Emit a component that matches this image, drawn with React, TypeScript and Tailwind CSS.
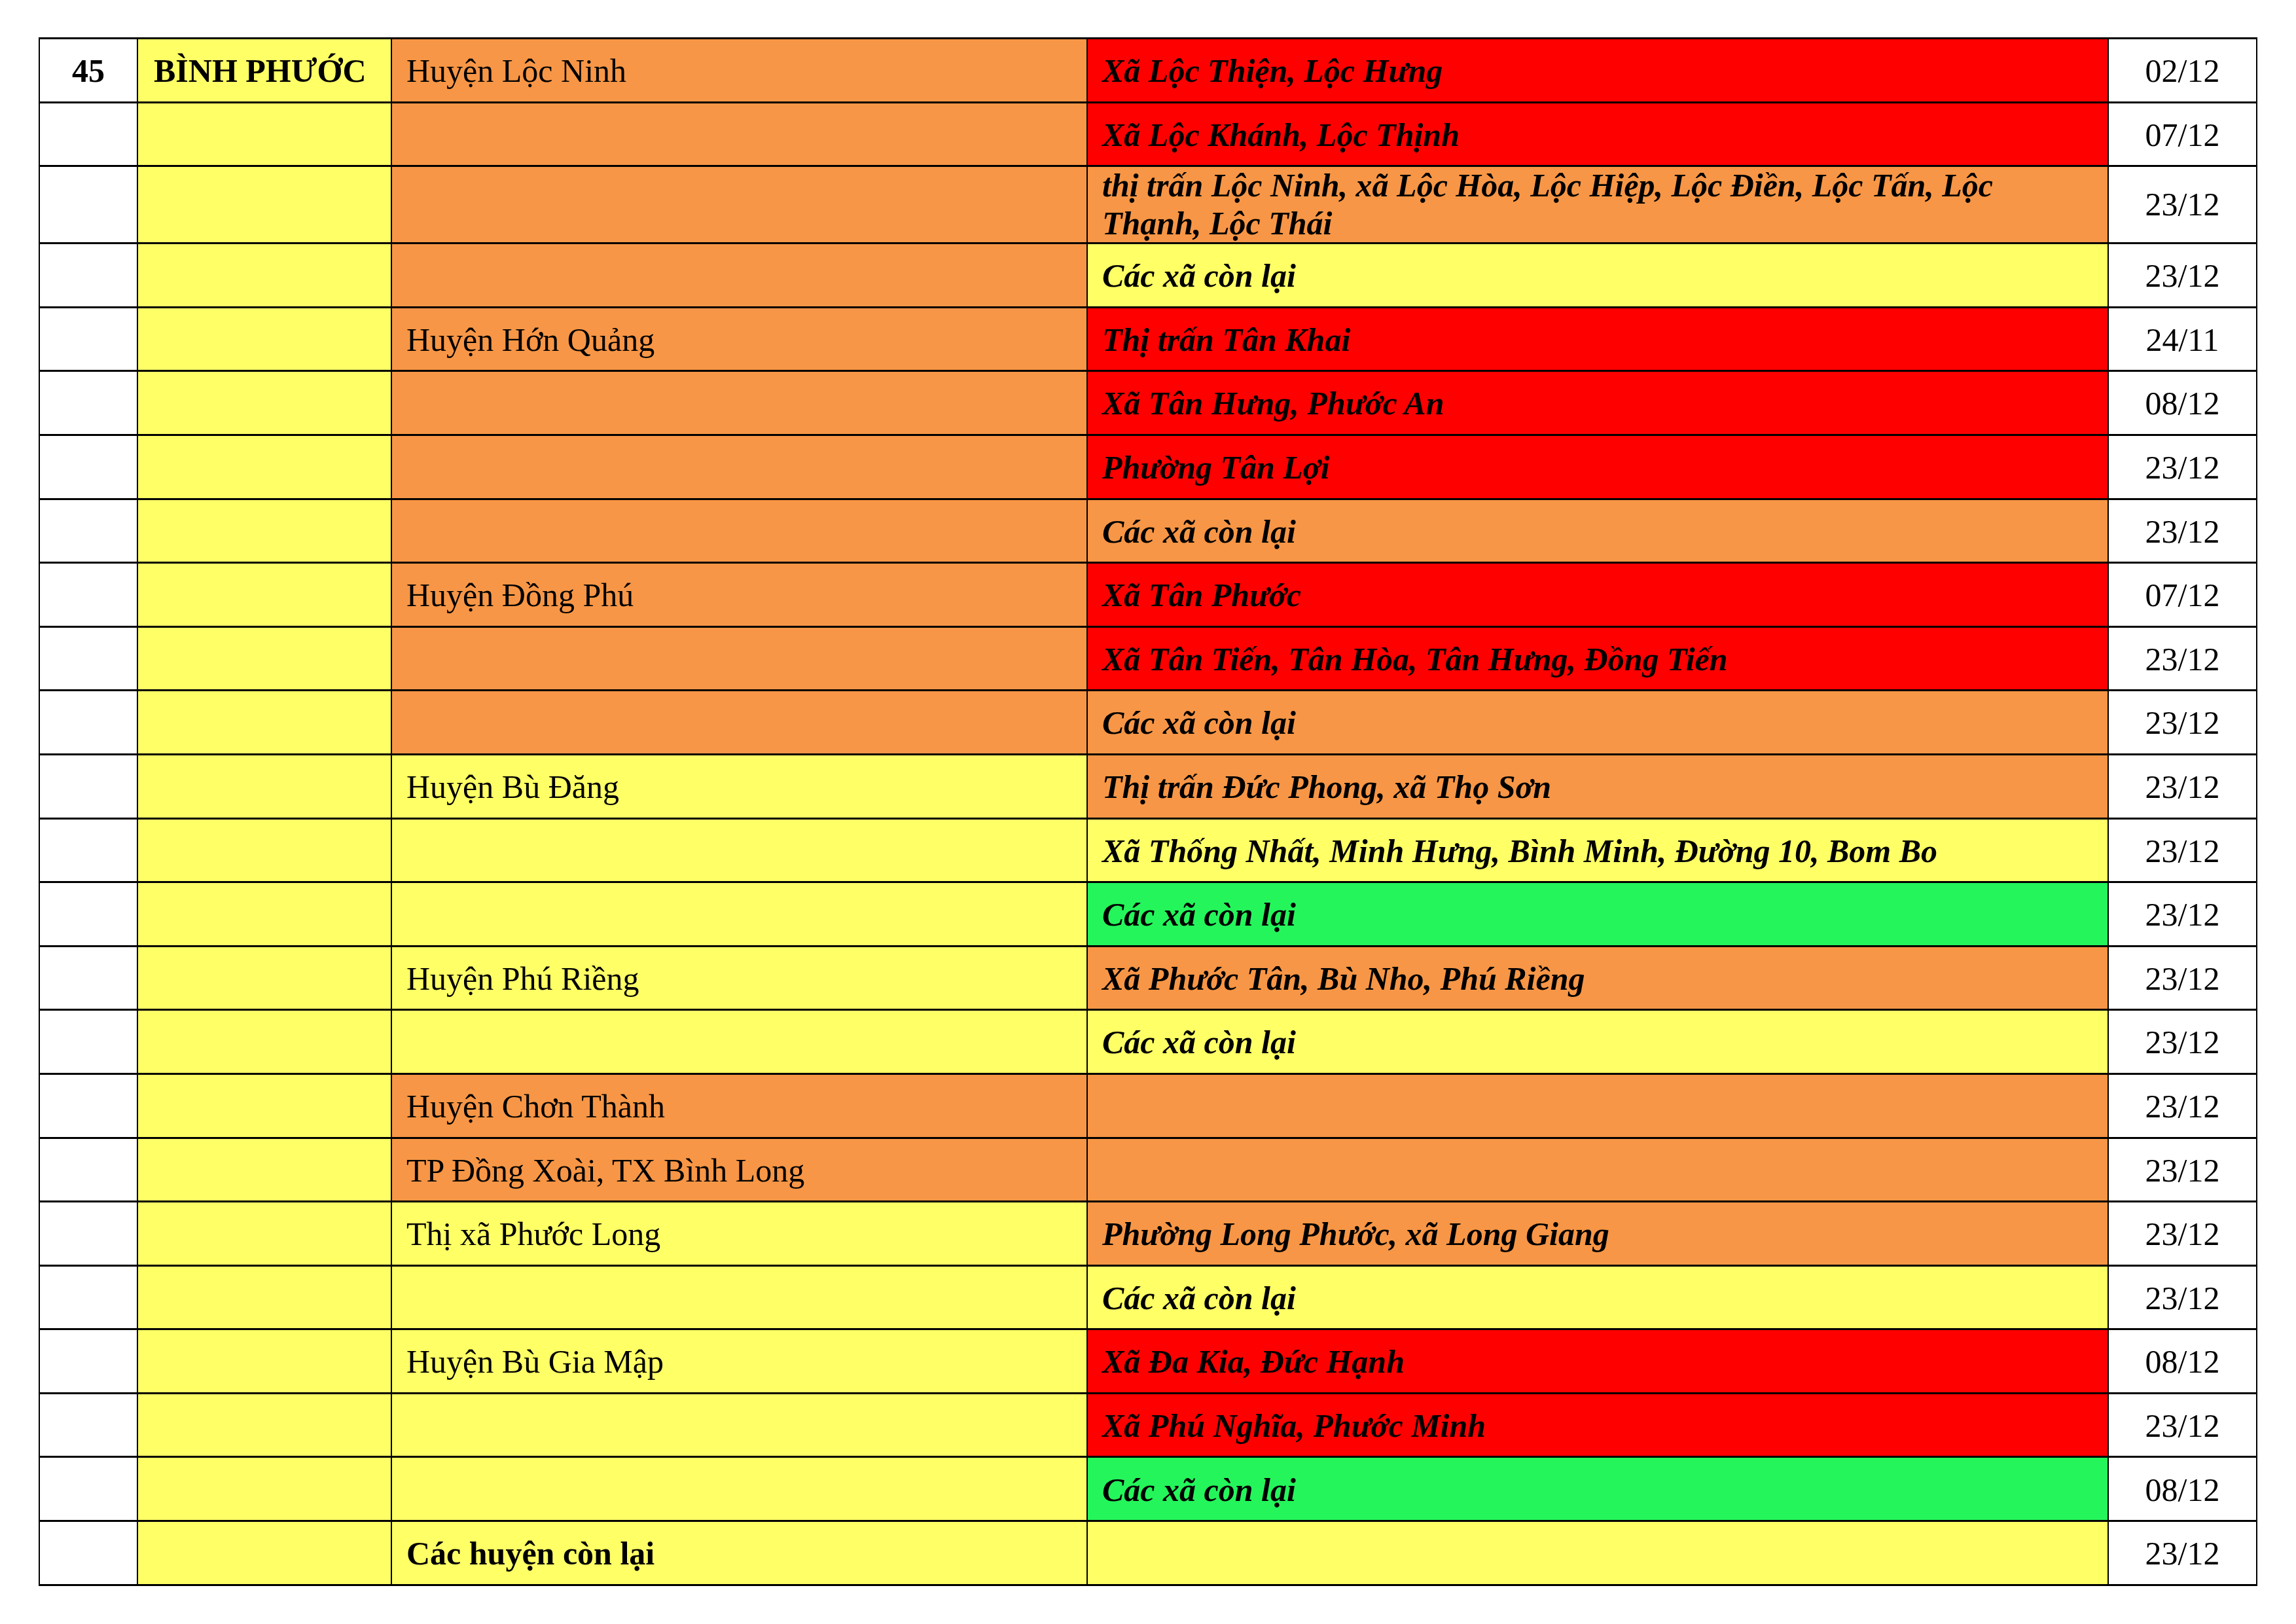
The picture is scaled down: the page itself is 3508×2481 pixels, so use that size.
import React from 'react';

type Fill = 'Y' | 'O' | 'R' | 'G';

type Row = {
  num?: string;
  province?: string;
  district?: string;
  districtBold?: boolean;
  districtFill: Fill;
  commune?: React.ReactNode;
  communeFill: Fill;
  date: string;
  tall?: boolean;
};

const fills: Record<Fill, string> = {
  Y: 'bg-[#ffff66]',
  O: 'bg-[#f79646]',
  R: 'bg-[#ff0000]',
  G: 'bg-[#24f55b]',
};

const rows: Row[] = [
  { num: '45', province: 'BÌNH PHƯỚC', district: 'Huyện Lộc Ninh', districtFill: 'O', commune: 'Xã Lộc Thiện, Lộc Hưng', communeFill: 'R', date: '02/12' },
  { districtFill: 'O', commune: 'Xã Lộc Khánh, Lộc Thịnh', communeFill: 'R', date: '07/12' },
  {
    districtFill: 'O',
    commune: (
      <>
        thị trấn Lộc Ninh, xã Lộc Hòa, Lộc Hiệp, Lộc Điền, Lộc Tấn, Lộc
        <br />
        Thạnh, Lộc Thái
      </>
    ),
    communeFill: 'O',
    date: '23/12',
    tall: true,
  },
  { districtFill: 'O', commune: 'Các xã còn lại', communeFill: 'Y', date: '23/12' },
  { district: 'Huyện Hớn Quảng', districtFill: 'O', commune: 'Thị trấn Tân Khai', communeFill: 'R', date: '24/11' },
  { districtFill: 'O', commune: 'Xã Tân Hưng, Phước An', communeFill: 'R', date: '08/12' },
  { districtFill: 'O', commune: 'Phường Tân Lợi', communeFill: 'R', date: '23/12' },
  { districtFill: 'O', commune: 'Các xã còn lại', communeFill: 'O', date: '23/12' },
  { district: 'Huyện Đồng Phú', districtFill: 'O', commune: 'Xã Tân Phước', communeFill: 'R', date: '07/12' },
  { districtFill: 'O', commune: 'Xã Tân Tiến, Tân Hòa, Tân Hưng, Đồng Tiến', communeFill: 'R', date: '23/12' },
  { districtFill: 'O', commune: 'Các xã còn lại', communeFill: 'O', date: '23/12' },
  { district: 'Huyện Bù Đăng', districtFill: 'Y', commune: 'Thị trấn Đức Phong, xã Thọ Sơn', communeFill: 'O', date: '23/12' },
  { districtFill: 'Y', commune: 'Xã Thống Nhất, Minh Hưng, Bình Minh, Đường 10, Bom Bo', communeFill: 'Y', date: '23/12' },
  { districtFill: 'Y', commune: 'Các xã còn lại', communeFill: 'G', date: '23/12' },
  { district: 'Huyện Phú Riềng', districtFill: 'Y', commune: 'Xã Phước Tân, Bù Nho, Phú Riềng', communeFill: 'O', date: '23/12' },
  { districtFill: 'Y', commune: 'Các xã còn lại', communeFill: 'Y', date: '23/12' },
  { district: 'Huyện Chơn Thành', districtFill: 'O', communeFill: 'O', date: '23/12' },
  { district: 'TP Đồng Xoài, TX Bình Long', districtFill: 'O', communeFill: 'O', date: '23/12' },
  { district: 'Thị xã Phước Long', districtFill: 'Y', commune: 'Phường Long Phước, xã Long Giang', communeFill: 'O', date: '23/12' },
  { districtFill: 'Y', commune: 'Các xã còn lại', communeFill: 'Y', date: '23/12' },
  { district: 'Huyện Bù Gia Mập', districtFill: 'Y', commune: 'Xã Đa Kia, Đức Hạnh', communeFill: 'R', date: '08/12' },
  { districtFill: 'Y', commune: 'Xã Phú Nghĩa, Phước Minh', communeFill: 'R', date: '23/12' },
  { districtFill: 'Y', commune: 'Các xã còn lại', communeFill: 'G', date: '08/12' },
  { district: 'Các huyện còn lại', districtBold: true, districtFill: 'Y', communeFill: 'Y', date: '23/12' },
];

const App: React.FC = () => {
  return (
    <div className="min-h-screen bg-white pt-[57px] pl-[59px] font-['Liberation_Serif','Times_New_Roman',serif] text-[50px] leading-[1.15] text-black">
      <div className="w-max border-t-[3px] border-l-2 border-black">
        {rows.map((row, i) => {
          // single-line rows sit a touch low in the original
          const cell = `flex items-center border-r-2 border-black ${row.tall ? '' : 'pt-[3px]'}`;
          return (
            <div
              key={i}
              className={`grid grid-cols-[150px_388px_1063px_1560px_227px] border-b-[3px] border-black ${row.tall ? 'h-[118px]' : 'h-[97.6px]'}`}
            >
              {/* STT */}
              <div className={`${cell} justify-center bg-white font-bold`}>{row.num}</div>
              {/* Tỉnh */}
              <div className={`${cell} pl-[24px] font-bold ${fills.Y}`}>{row.province}</div>
              {/* Huyện */}
              <div className={`${cell} pl-[22px] ${row.districtBold ? 'font-bold' : ''} ${fills[row.districtFill]}`}>
                {row.district}
              </div>
              {/* Xã */}
              <div className={`${cell} pl-[22px] font-bold italic ${fills[row.communeFill]}`}>
                <span>{row.commune}</span>
              </div>
              {/* Ngày */}
              <div className={`${cell} justify-center bg-white`}>{row.date}</div>
            </div>
          );
        })}
      </div>
    </div>
  );
};

export default App;
